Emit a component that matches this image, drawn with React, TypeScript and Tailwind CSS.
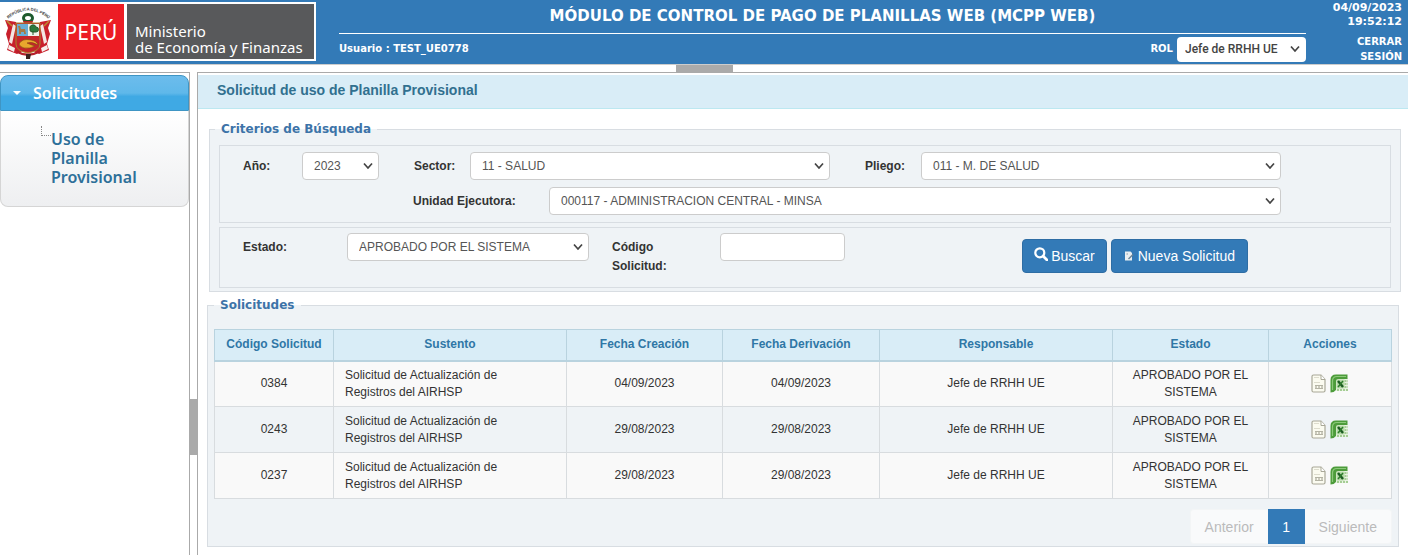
import React, { useState } from 'react';
import { clsx } from 'clsx';

interface Solicitud {
  codigo: string;
  sustento: string;
  creacion: string;
  derivacion: string;
  responsable: string;
  estado: string;
}

const solicitudes: Solicitud[] = [
  { codigo: '0384', sustento: 'Solicitud de Actualización de Registros del AIRHSP', creacion: '04/09/2023', derivacion: '04/09/2023', responsable: 'Jefe de RRHH UE', estado: 'APROBADO POR EL SISTEMA' },
  { codigo: '0243', sustento: 'Solicitud de Actualización de Registros del AIRHSP', creacion: '29/08/2023', derivacion: '29/08/2023', responsable: 'Jefe de RRHH UE', estado: 'APROBADO POR EL SISTEMA' },
  { codigo: '0237', sustento: 'Solicitud de Actualización de Registros del AIRHSP', creacion: '29/08/2023', derivacion: '29/08/2023', responsable: 'Jefe de RRHH UE', estado: 'APROBADO POR EL SISTEMA' },
];

const columns = ['Código Solicitud', 'Sustento', 'Fecha Creación', 'Fecha Derivación', 'Responsable', 'Estado', 'Acciones'];

function Escudo() {
  return (
    <svg viewBox="0 0 48 56" className="w-12 h-14" role="img" aria-label="Escudo del Perú">
      <path id="arco" d="M3 16 Q24 -3 46 16" fill="none" />
      <text className="font-['Liberation_Sans'] font-bold" fontSize="4" fill="#333">
        <textPath href="#arco" startOffset="50%" textAnchor="middle">REPÚBLICA DEL PERÚ</textPath>
      </text>
      {/* banderas */}
      <path d="M12 18 L1 16 L4 24 L2 30 L5 40 L3 46 L13 50 L20 46 Z" fill="#c8202c" />
      <path d="M36 18 L47 16 L44 24 L46 30 L43 40 L45 46 L35 50 L28 46 Z" fill="#c8202c" />
      <path d="M9 20 L5 38 L8 40 L12 22 Z M39 20 L43 38 L40 40 L36 22 Z" fill="#f3e6e2" />
      <path d="M5 41 L11 44 L10 48 L4 45 Z M43 41 L37 44 L38 48 L44 45 Z" fill="#f6efec" />
      <path d="M3 17 L8 22 M45 17 L40 22" stroke="#b98a2f" strokeWidth="1.5" />
      {/* corona */}
      <ellipse cx="24" cy="14" rx="4.5" ry="3.5" fill="#fff" stroke="#1d5a2c" strokeWidth="3" />
      <path d="M19 17 L29 17 L28 20 L20 20 Z" fill="#b5222b" />
      {/* campos */}
      <path d="M12 19 H36 V40 Q36 47 24 49 Q12 47 12 40 Z" fill="#c4252a" stroke="#a8842c" strokeWidth="1" />
      <path d="M13 20 H24 V32 H13 Z" fill="#68aed6" />
      <path d="M24 20 H35 V32 H24 Z" fill="#eef2ea" />
      <path d="M15 30 V25 L14 22 L16 22 L17 25 H21 L22 30 H20 L20 28 H17 V30 Z" fill="#a57a45" />
      <path d="M29 31 V27 M26 25 a3 3 0 0 1 6 -2 a2.5 2.5 0 0 1 0 5 h-4 a2.5 2.5 0 0 1 -2 -3 Z" fill="#2b7a3d" stroke="#2b5a2d" strokeWidth="1" />
      <path d="M15 40 Q18 34 27 36 Q33 37 34 41 Q28 37 23 39 Q27 41 31 42 Q26 45 20 44 Q16 43 15 40 Z" fill="#e9a72d" stroke="#7c4a12" strokeWidth="0.6" />
      <path d="M12 46 Q24 53 36 46 L35 49 Q24 55 13 49 Z" fill="#b51f2a" />
      <path d="M22 50 h5 l-1 5 h-4 Z" fill="#3a2320" />
    </svg>
  );
}

function Chevron() {
  return (
    <svg viewBox="0 0 10 7" className="pointer-events-none absolute right-1.5 top-1/2 -translate-y-1/2 w-2.5 h-[7px]">
      <path d="M1 1 L5 5.5 L9 1" fill="none" stroke="#444" strokeWidth="1.7" />
    </svg>
  );
}

function Select({ id, value, className }: { id: string; value: string; className: string }) {
  return (
    <div className={clsx('relative', className)}>
      <select id={id} className="block w-full h-7 appearance-none rounded border border-[#ccc] bg-white pl-[11px] pr-5 text-xs text-[#555]">
        <option>{value}</option>
      </select>
      <Chevron />
    </div>
  );
}

function DocIcon() {
  return (
    <svg viewBox="0 0 15 19" className="w-[15px] h-[19px]">
      <path d="M1 2.5 Q1 1 2.5 1 H10 L14 5.5 V16.5 Q14 18 12.5 18 H2.5 Q1 18 1 16.5 Z" fill="#fbfbf0" stroke="#a9a898" strokeWidth="1.2" />
      <path d="M10 1 V5.5 H14" fill="#fff" stroke="#a9a898" />
      <path d="M3 3.5 H8 M3 8.5 H9" stroke="#dddccd" />
      <path d="M4 11.5 H12 M4 14.5 H12" stroke="#b4b3a4" />
      <path d="M4 13 H12" stroke="#9b9a8a" strokeDasharray="2 1" />
    </svg>
  );
}

function ExcelIcon() {
  return (
    <svg viewBox="0 0 19 19" className="w-[19px] h-[19px]">
      <path d="M6 4 H18 V17 H6 Z" fill="#e9f3e2" />
      <path d="M14.5 7 H18 M14.5 10 H18 M14.5 13 H18 M7 16 H18" stroke="#8fc17b" strokeDasharray="2 1" strokeWidth="1.5" />
      <path d="M0.5 18.5 V6 Q0.5 0.5 6 0.5 H17.5 V5 H9 Q6 5 6 8 V16 Q4 18.5 0.5 18.5 Z" fill="#4d9c3b" />
      <path d="M2.5 16 V7 Q2.5 2.5 7 2.5 H16" fill="none" stroke="#8cc97a" strokeWidth="1.2" />
      <path d="M6.500 5.500 H14.500 V14.500 H6.500 Z" fill="#b5d9a6" />
      <path d="M8 7 L13 13" stroke="#1c5c22" strokeWidth="2.400" />
      <path d="M13 7 L8 13" stroke="#2d7d2c" strokeWidth="1.500" />
    </svg>
  );
}

function Header() {
  return (
    <header className="flex h-16 bg-[#337ab7] text-white font-['DejaVu_Sans',sans-serif] font-bold">
      <div className="mt-0.5 flex h-[59px] w-[316px] shrink-0 gap-[3px] bg-white py-0.5 pr-0.5 font-['Noto_Sans',sans-serif] font-normal">
        <div className="flex w-[55px] justify-center">
          <Escudo />
        </div>
        <div className="flex w-[66px] items-center justify-center bg-[#ec1c24] text-[21px] leading-6">PERÚ</div>
        <div className="flex flex-1 flex-col justify-end bg-[#58595b] pb-1 pl-2 text-[15px] leading-4">
          <p>Ministerio<br />de Economía y Finanzas</p>
        </div>
      </div>
      <div className="ml-[23px] flex-1">
        <h1 className="h-[34px] border-b border-white text-center text-[15px] leading-[33px]">
          MÓDULO DE CONTROL DE PAGO DE PLANILLAS WEB (MCPP WEB)
        </h1>
        <div className="flex h-[30px] items-center justify-between text-[10px]">
          <span>Usuario : TEST_UE0778</span>
          <div className="flex items-center gap-1">
            <label htmlFor="rol">ROL</label>
            <div className="relative">
              <select id="rol" className="block h-[25px] w-[129px] appearance-none rounded-sm bg-white pl-2 font-['Roboto',sans-serif] text-xs font-medium text-[#444]">
                <option>Jefe de RRHH UE</option>
              </select>
              <Chevron />
            </div>
          </div>
        </div>
      </div>
      <div className="w-[102px] pr-1.5 pt-px text-right text-[11px] leading-[14px]">
        <p>04/09/2023</p>
        <p>19:52:12</p>
        <a href="#salir" className="ml-auto mt-[5px] block w-[60px] text-[10px] leading-[15px]">CERRAR SESIÓN</a>
      </div>
    </header>
  );
}

function Sidebar() {
  const [open, setOpen] = useState(true);
  return (
    <aside className="w-[190px] shrink-0 border-r border-t border-[#aaa] pt-0.5 font-['Noto_Sans',sans-serif] font-semibold">
      <button
        className="flex h-9 w-full items-center gap-3 rounded-t-lg border border-[#3f95c4] bg-linear-to-b from-[#6cbcec] from-0% via-[#5fb8ea] via-50% to-[#3fa9e4] to-60% pl-3 text-base text-white"
        aria-expanded={open}
        onClick={() => setOpen(!open)}
      >
        <svg viewBox="0 0 8 4" className="w-2 h-1"><path d="M0 0 H8 L4 4 Z" fill="#fff" /></svg>
        Solicitudes
      </button>
      {open && (
        <nav className="flex h-24 rounded-b-lg border border-t-0 border-[#d5d5d5] bg-linear-to-b from-white to-[#eeeff1] pl-10 pt-[15px]">
          <div className="h-2.5 w-2.5 border-b border-l border-dotted border-[#888]" />
          <a href="#uso" className="mt-1 w-[100px] text-base leading-[19px] text-[#2e7099]">Uso de Planilla Provisional</a>
        </nav>
      )}
    </aside>
  );
}

function Criterios() {
  return (
    <fieldset className="ml-[11px] mr-[7px] border border-[#d8dde2] bg-[#eff3f6] px-[9px] pb-[3px]">
      <legend className="-ml-1 px-1.5 font-['DejaVu_Sans',sans-serif] text-xs leading-4 font-bold text-[#3d73a8]">Criterios de Búsqueda</legend>
      <div className="mb-1 mt-2 space-y-[7px] border border-[#d8dde2] pb-[7px] pl-[23px] pr-[109px] pt-1.5">
        <div className="flex items-center font-bold">
          <label htmlFor="anio" className="w-[59px]">Año:</label>
          <Select id="anio" value="2023" className="w-[77px] font-normal" />
          <label htmlFor="sector" className="ml-[35px] w-14">Sector:</label>
          <Select id="sector" value="11 - SALUD" className="flex-1 font-normal" />
          <label htmlFor="pliego" className="ml-[35px] w-14">Pliego:</label>
          <Select id="pliego" value="011 - M. DE SALUD" className="flex-1 font-normal" />
        </div>
        <div className="flex items-center pl-[170px] font-bold">
          <label htmlFor="unidad" className="w-[136px]">Unidad Ejecutora:</label>
          <Select id="unidad" value="000117 - ADMINISTRACION CENTRAL - MINSA" className="flex-1 font-normal" />
        </div>
      </div>
      <div className="flex h-[61px] items-start border border-[#d8dde2] pl-[23px] pr-[142px] pt-[5px] font-bold">
        <label htmlFor="estado" className="w-[104px] leading-7">Estado:</label>
        <Select id="estado" value="APROBADO POR EL SISTEMA" className="w-[242px] font-normal" />
        <label htmlFor="codigo" className="ml-[23px] mt-[5px] w-[108px] pr-10 leading-[19px]">Código Solicitud:</label>
        <input id="codigo" type="text" className="h-7 w-[125px] rounded border border-[#ccc] bg-white px-2 font-normal" />
        <div className="ml-auto mt-1.5 flex gap-1 text-sm font-normal">
          <button className="flex h-[34px] items-center gap-[3px] rounded border border-[#2e6da4] bg-[#337ab7] px-[11px] text-white">
            <svg viewBox="0 0 14 14" className="mb-1 h-3.5 w-3.5">
              <circle cx="5.8" cy="5.8" r="4.5" fill="none" stroke="#fff" strokeWidth="2.2" />
              <path d="M9 9 L13 13" stroke="#fff" strokeWidth="2.8" strokeLinecap="round" />
            </svg>
            Buscar
          </button>
          <button className="flex h-[34px] items-center gap-1 rounded border border-[#2e6da4] bg-[#337ab7] px-3 text-white">
            <svg viewBox="0 0 10 10" className="h-2.5 w-2.5">
              <path d="M1 0.5 H6.5 L8 2 V9.5 H1 Z" fill="#e8eef2" />
              <path d="M2.5 3 H4" stroke="#8d99a3" />
              <path d="M4 7.5 L8.5 3 L9.5 4 L5 8.5 Z" fill="#6b8496" />
            </svg>
            Nueva Solicitud
          </button>
        </div>
      </div>
    </fieldset>
  );
}

function Resultados() {
  return (
    <fieldset className="ml-[9px] mr-[9px] mt-[5px] border border-[#d8dde2] bg-[#eff3f6] px-1.5 pb-0.5">
      <legend className="px-1.5 font-['DejaVu_Sans',sans-serif] text-xs leading-4 font-bold text-[#3d73a8]">Solicitudes</legend>
      <table className="mt-4 w-full table-fixed border-collapse text-center leading-[17px]">
        <colgroup>
          <col className="w-[119px]" />
          <col className="w-[233px]" />
          <col className="w-[156px]" />
          <col className="w-[157px]" />
          <col className="w-[233px]" />
          <col className="w-[156px]" />
          <col className="w-[123px]" />
        </colgroup>
        <thead>
          <tr className="h-[31px] bg-[#d9edf7] text-[#2f77a6]">
            {columns.map(c => (
              <th key={c} className="border border-b-2 border-[#b9d3df] font-bold">{c}</th>
            ))}
          </tr>
        </thead>
        <tbody className="text-[#333]">
          {solicitudes.map(s => (
            <tr key={s.codigo} className="h-[46px] odd:bg-[#f9f9f9]">
              <td className="border border-[#d8dcdf]">{s.codigo}</td>
              <td className="border border-[#d8dcdf] pl-[11px] pr-14 text-left">{s.sustento}</td>
              <td className="border border-[#d8dcdf]">{s.creacion}</td>
              <td className="border border-[#d8dcdf]">{s.derivacion}</td>
              <td className="border border-[#d8dcdf]">{s.responsable}</td>
              <td className="border border-[#d8dcdf] px-4">{s.estado}</td>
              <td className="border border-[#d8dcdf]">
                <div className="flex justify-center gap-1">
                  <button aria-label="Ver documento"><DocIcon /></button>
                  <button aria-label="Exportar a Excel"><ExcelIcon /></button>
                </div>
              </td>
            </tr>
          ))}
        </tbody>
      </table>
      <div className="mt-2.5 flex justify-end text-sm">
        <button className="h-[35px] rounded-l border border-r-0 border-[#f3f5f6] bg-[#f9fafb] px-3.5 text-[#bbb]">Anterior</button>
        <button className="h-[35px] w-[37px] bg-[#337ab7] text-white">1</button>
        <button className="h-[35px] rounded-r border border-l-0 border-[#f3f5f6] bg-[#f9fafb] px-3.5 text-[#bbb]">Siguiente</button>
      </div>
    </fieldset>
  );
}

export default function App() {
  return (
    <div className="flex min-h-screen flex-col bg-white font-['Liberation_Sans',Arial,sans-serif] text-xs text-[#333]">
      <Header />
      <div className="flex h-2 justify-center border-t border-[#ccc]">
        <div className="w-[57px] bg-[#aaa]" />
      </div>
      <div className="flex flex-1">
        <Sidebar />
        <div className="flex w-[7px] shrink-0 flex-col pt-[327px]">
          <div className="h-14 bg-[#aaa]" />
        </div>
        <main className="min-w-0 flex-1 border-l border-t border-[#aaa]">
          <h2 className="mb-3 mt-0.5 h-[34px] border-b border-[#bce8f1] bg-[#d9edf7] pl-[19px] text-sm leading-[31px] font-bold text-[#31708f]">
            Solicitud de uso de Planilla Provisional
          </h2>
          <Criterios />
          <Resultados />
        </main>
      </div>
    </div>
  );
}
